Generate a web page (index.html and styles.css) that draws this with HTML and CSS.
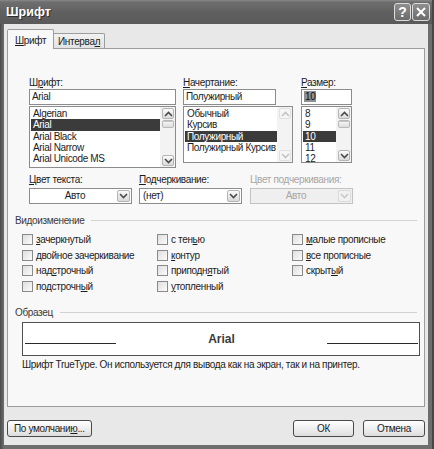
FILE: index.html
```html
<!DOCTYPE html>
<html lang="ru">
<head>
<meta charset="utf-8">
<title>Шрифт</title>
<link rel="stylesheet" href="styles.css">
</head>
<body>
<div class="window">
  <div class="titlebar">
    <span class="title">Шрифт</span>
    <div class="caption-btns">
      <span class="cap-btn help">?</span>
      <span class="cap-btn close">
        <svg width="10" height="10" viewBox="0 0 10 10"><path d="M1 1 L9 9 M9 1 L1 9" stroke="#fff" stroke-width="2" fill="none"/></svg>
      </span>
    </div>
  </div>

  <div class="client">
    <div class="tabs">
      <div class="tab active"><u>Ш</u>рифт</div>
      <div class="tab">Интерва<u>л</u></div>
    </div>

    <div class="panel">
      <div class="font-row">
        <div class="col col-font">
          <div class="label">Ш<u>р</u>ифт:</div>
          <div class="input">Arial</div>
          <div class="list list-font">
            <ul class="items">
              <li>Algerian</li>
              <li class="sel">Arial</li>
              <li>Arial Black</li>
              <li>Arial Narrow</li>
              <li>Arial Unicode MS</li>
            </ul>
            <div class="vscroll">
              <span class="arrow"><svg width="9" height="6" viewBox="0 0 9 6"><polyline points="1,5 4.5,1.5 8,5" fill="none" stroke="#4a4a4a" stroke-width="1.6"/></svg></span>
              <span class="thumb"></span>
              <span class="track"></span>
              <span class="arrow"><svg width="9" height="6" viewBox="0 0 9 6"><polyline points="1,1 4.5,4.5 8,1" fill="none" stroke="#4a4a4a" stroke-width="1.6"/></svg></span>
            </div>
          </div>
        </div>

        <div class="col col-style">
          <div class="label"><u>Н</u>ачертание:</div>
          <div class="input input-style">Полужирный</div>
          <div class="list list-short">
            <ul class="items">
              <li>Обычный</li>
              <li>Курсив</li>
              <li class="sel">Полужирный</li>
              <li>Полужирный Курсив</li>
            </ul>
            <div class="vscroll off">
              <span class="arrow"><svg width="9" height="6" viewBox="0 0 9 6"><polyline points="1,5 4.5,1.5 8,5" fill="none" stroke="#c4c4c4" stroke-width="1.6"/></svg></span>
              <span class="track"></span>
              <span class="arrow"><svg width="9" height="6" viewBox="0 0 9 6"><polyline points="1,1 4.5,4.5 8,1" fill="none" stroke="#c4c4c4" stroke-width="1.6"/></svg></span>
            </div>
          </div>
        </div>

        <div class="col col-size">
          <div class="label"><u>Р</u>азмер:</div>
          <div class="input"><span class="picked">10</span></div>
          <div class="list list-short">
            <ul class="items">
              <li>8</li>
              <li>9</li>
              <li class="sel">10</li>
              <li>11</li>
              <li>12</li>
            </ul>
            <div class="vscroll">
              <span class="arrow"><svg width="9" height="6" viewBox="0 0 9 6"><polyline points="1,5 4.5,1.5 8,5" fill="none" stroke="#4a4a4a" stroke-width="1.6"/></svg></span>
              <span class="thumb"></span>
              <span class="track"></span>
              <span class="arrow"><svg width="9" height="6" viewBox="0 0 9 6"><polyline points="1,1 4.5,4.5 8,1" fill="none" stroke="#4a4a4a" stroke-width="1.6"/></svg></span>
            </div>
          </div>
        </div>
      </div>

      <div class="combo-row">
        <div class="combo-col">
          <div class="label"><u>Ц</u>вет текста:</div>
          <div class="combo">
            <span class="value center">Авто</span>
            <span class="drop"><svg width="9" height="6" viewBox="0 0 9 6"><polyline points="1,1 4.5,4.5 8,1" fill="none" stroke="#4a4a4a" stroke-width="1.6"/></svg></span>
          </div>
        </div>
        <div class="combo-col">
          <div class="label"><u>П</u>одчеркивание:</div>
          <div class="combo">
            <span class="value">(нет)</span>
            <span class="drop"><svg width="9" height="6" viewBox="0 0 9 6"><polyline points="1,1 4.5,4.5 8,1" fill="none" stroke="#4a4a4a" stroke-width="1.6"/></svg></span>
          </div>
        </div>
        <div class="combo-col">
          <div class="label disabled">Цвет подчеркивания:</div>
          <div class="combo disabled">
            <span class="value center">Авто</span>
            <span class="drop"><svg width="9" height="6" viewBox="0 0 9 6"><polyline points="1,1 4.5,4.5 8,1" fill="none" stroke="#c8c8c8" stroke-width="1.6"/></svg></span>
          </div>
        </div>
      </div>

      <div class="group-head">Видоизменение</div>
      <div class="checks">
        <div class="check"><span class="box"></span><span><u>з</u>ачеркнутый</span></div>
        <div class="check"><span class="box"></span><span>двойное зачеркивание</span></div>
        <div class="check"><span class="box"></span><span>над<u>с</u>трочный</span></div>
        <div class="check"><span class="box"></span><span>подстрочн<u>ы</u>й</span></div>
        <div class="check"><span class="box"></span><span>с тен<u>ь</u>ю</span></div>
        <div class="check"><span class="box"></span><span><u>к</u>онтур</span></div>
        <div class="check"><span class="box"></span><span>приподн<u>я</u>тый</span></div>
        <div class="check"><span class="box"></span><span><u>у</u>топленный</span></div>
        <div class="check"><span class="box"></span><span><u>м</u>алые прописные</span></div>
        <div class="check"><span class="box"></span><span><u>в</u>се прописные</span></div>
        <div class="check"><span class="box"></span><span>скрыт<u>ы</u>й</span></div>
      </div>

      <div class="group-head sample-head">Образец</div>
      <div class="sample">
        <span class="rule"></span>
        <span class="sample-text">Arial</span>
        <span class="rule"></span>
      </div>
      <p class="note">Шрифт TrueType. Он используется для вывода как на экран, так и на принтер.</p>
    </div>

    <div class="footer">
      <button class="btn btn-default" type="button">По умолчани<u>ю</u>...</button>
      <button class="btn btn-ok" type="button">ОК</button>
      <button class="btn btn-cancel" type="button">Отмена</button>
    </div>
  </div>
</div>
</body>
</html>
```

FILE: styles.css
```css
* { box-sizing: border-box; }

body {
  margin: 0;
  font-family: "Liberation Sans", Arial, sans-serif;
  font-size: 10px;
  letter-spacing: -0.35px;
  color: #1c1c1c;
  background: #5a5a5a;
}

u { text-decoration: underline; text-underline-offset: 1px; }

/* window frame */
.window {
  width: 434px;
  height: 449px;
  display: flex;
  flex-direction: column;
  background: linear-gradient(90deg, #4a4a4a 0, #5e5e5e 2px, #6e6e6e 4px);
  border-right: 2px solid #484848;
}

.titlebar {
  height: 24px;
  flex: none;
  display: flex;
  align-items: center;
  justify-content: space-between;
  padding: 0 2px 0 6px;
  background: linear-gradient(#8a8a8a 0, #6e6e6e 2px, #5f5f5f 55%, #5a5a5a 100%);
}

.title {
  color: #fff;
  font-weight: bold;
  font-size: 12.5px;
  letter-spacing: 0;
  text-shadow: 1px 1px 0 #2e2e2e;
}

.caption-btns { display: flex; gap: 1px; }

.cap-btn {
  width: 17px;
  height: 18px;
  border: 1px solid #dcdcdc;
  border-radius: 3px;
  background: linear-gradient(#8f8f8f, #6b6b6b);
  color: #fff;
  font-weight: bold;
  font-size: 14px;
  letter-spacing: 0;
  display: flex;
  align-items: center;
  justify-content: center;
}
.cap-btn.close { width: 18px; }

/* client area */
.client {
  flex: 1;
  margin: 0 4px 4px 4px;
  background: #e8e8e8;
  padding: 5px 3px 0 3px;
  display: flex;
  flex-direction: column;
}

.tabs {
  height: 19px;
  display: flex;
  align-items: flex-end;
  flex: none;
}

.tab {
  height: 15px;
  width: 51px;
  border: 1px solid #9c9c9c;
  border-bottom: none;
  border-left: none;
  border-radius: 0 2px 0 0;
  background: linear-gradient(#f2f2f2, #e2e2e2);
  padding: 2px 0 0 4px;
}

.tab.active {
  width: 47px;
  height: 20px;
  margin-bottom: -1px;
  border-left: 1px solid #9c9c9c;
  border-radius: 2px 2px 0 0;
  background: #f8f8f8;
  padding: 5px 0 0 7px;
  position: relative;
  z-index: 1;
}

.panel {
  height: 359px;
  flex: none;
  border: 1px solid #9c9c9c;
  background: #f8f8f8;
  padding: 27px 7px 0 7px;
}

.label {
  height: 13px;
  line-height: 13px;
  white-space: nowrap;
}
.label.disabled { color: #a6a6a6; }

/* font / style / size pickers */
.font-row {
  display: flex;
  align-items: flex-start;
  margin-left: 14px;
}

.col-font { width: 147px; margin-right: 7px; }
.col-style { width: 110px; margin-right: 8px; }
.col-size { width: 51px; }

.input {
  height: 16px;
  border: 1px solid #8c8c8c;
  background: #fff;
  padding: 0 2px;
  line-height: 14px;
}
.input-style { width: 93px; }

.picked {
  background: #8f8f8f;
  color: #111;
  padding: 0 1px;
}

.list {
  display: flex;
  margin-top: 1px;
  border: 1px solid #8c8c8c;
  background: #fff;
}
.list-font { height: 62px; }
.list-short { height: 57px; }

.items {
  flex: 1;
  list-style: none;
  margin: 0;
  padding: 1px 0 0 1px;
  min-width: 0;
}

.items li {
  height: 11.3px;
  line-height: 11px;
  padding-left: 2px;
  white-space: nowrap;
}
.items li.sel { background: #3b3b3b; color: #fff; }

.vscroll {
  width: 15px;
  flex: none;
  display: flex;
  flex-direction: column;
  padding: 1px 1px 1px 2px;
  background: #f3f3f3;
}

.arrow {
  height: 11px;
  border: 1px solid #b4b4b4;
  border-radius: 2px;
  background: linear-gradient(#fbfbfb, #dadada);
  display: flex;
  align-items: center;
  justify-content: center;
}
.vscroll.off .arrow {
  border-color: #e0e0e0;
  background: #f6f6f6;
}

.thumb {
  height: 8px;
  margin-top: 1px;
  border: 1px solid #b8b8b8;
  border-radius: 2px;
  background: linear-gradient(#f8f8f8, #dedede);
  box-shadow: inset 0 3px 0 -2px #c4c4c4;
}

.track { flex: 1; }

/* colour / underline combos */
.combo-row {
  display: flex;
  margin: 5px 0 0 14px;
}

.combo-col { width: 103px; margin-right: 7px; }
.combo-col:nth-child(2) { width: 103px; margin-right: 8px; }

.combo {
  height: 16px;
  margin-top: 2px;
  border: 1px solid #8c8c8c;
  background: #fff;
  display: flex;
  padding: 1px;
}
.combo .value {
  flex: 1;
  line-height: 12px;
  padding-left: 2px;
}
.combo .value.center { text-align: center; }

.combo .drop {
  width: 13px;
  border: 1px solid #b4b4b4;
  border-radius: 2px;
  background: linear-gradient(#fafafa, #d9d9d9);
  display: flex;
  align-items: center;
  justify-content: center;
}

.combo.disabled {
  border-color: #c2c2c2;
  background: #efefef;
  color: #a6a6a6;
}
.combo.disabled .drop {
  border-color: #dadada;
  background: #f2f2f2;
}

/* group headings with rule */
.group-head {
  display: flex;
  align-items: center;
  gap: 7px;
  height: 13px;
  margin-top: 10px;
  color: #3a3a3a;
}
.group-head::after {
  content: "";
  flex: 1;
  height: 1px;
  background: #d2d2d2;
}

/* effects checkboxes */
.checks {
  display: grid;
  grid-template-columns: repeat(3, 135px);
  grid-template-rows: repeat(4, 15.5px);
  grid-auto-flow: column;
  margin: 5px 0 0 7px;
}

.check {
  display: flex;
  align-items: center;
  gap: 3px;
  white-space: nowrap;
}

.box {
  width: 11px;
  height: 11px;
  flex: none;
  border: 1px solid #8a8a8a;
  background: linear-gradient(135deg, #dedede, #fbfbfb);
}

/* preview */
.sample-head { margin-top: 12px; }

.sample {
  width: 398px;
  height: 34px;
  margin: 3px 0 0 7px;
  border: 1px solid #505050;
  background: #fff;
  display: flex;
  align-items: flex-start;
  padding: 0 1px 0 2px;
}

.rule {
  width: 91px;
  height: 1px;
  margin-top: 20px;
  background: #2a2a2a;
  flex: none;
}

.sample-text {
  flex: 1;
  text-align: center;
  font-weight: bold;
  font-size: 12px;
  letter-spacing: 0;
  line-height: 32px;
  color: #3a3a3a;
}

.note {
  margin: 2px 0 0 7px;
  line-height: 13px;
  white-space: nowrap;
}

/* dialog buttons */
.footer {
  display: flex;
  padding-top: 13px;
  gap: 9px;
}

.btn {
  height: 17px;
  border: 1px solid #4a4a4a;
  border-radius: 3px;
  background: linear-gradient(#ffffff, #ececec 60%, #dcdcdc);
  font: inherit;
  letter-spacing: inherit;
  color: #1c1c1c;
  padding: 0;
  line-height: 13px;
}
.btn-default { width: 85px; text-align: left; padding-left: 6px; }
.btn-ok { width: 61px; margin-left: auto; }
.btn-cancel { width: 62px; }
```
